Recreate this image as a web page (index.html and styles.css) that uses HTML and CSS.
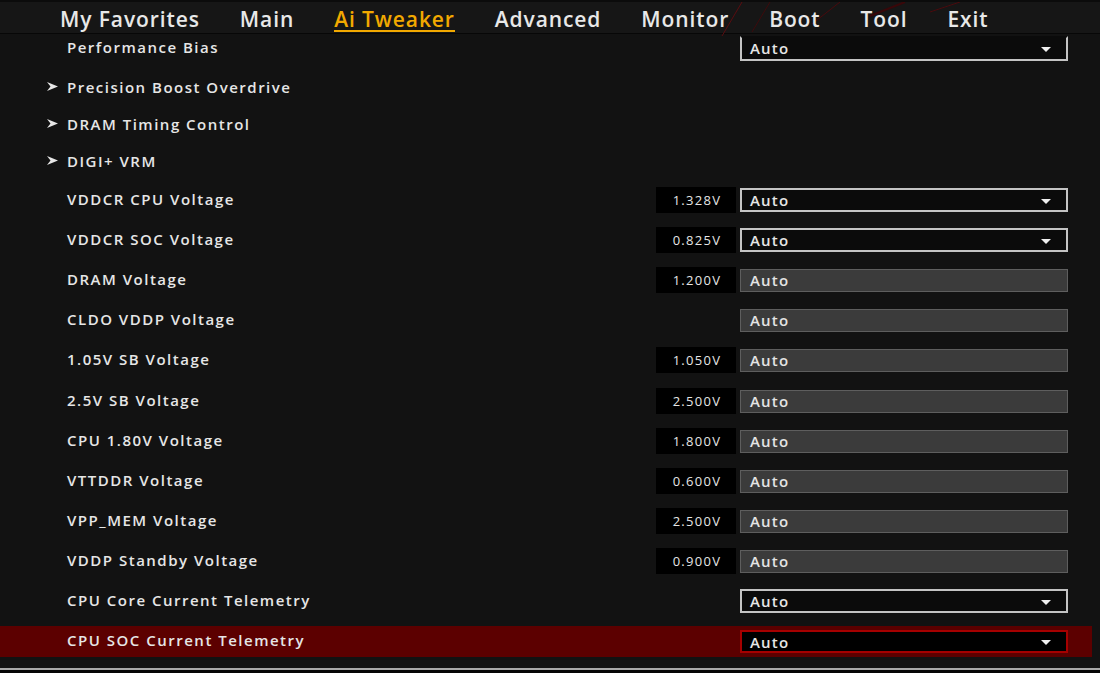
FILE: index.html
```html
<!DOCTYPE html>
<html lang="en">
<head>
    <meta charset="UTF-8">
    <meta name="viewport" content="width=device-width, initial-scale=1.0">
    <title>Ai Tweaker</title>
    <link rel="stylesheet" href="styles.css">
</head>
<body>

    <header class="topbar">
        <svg class="streaks" width="1100" height="34" viewBox="0 0 1100 34">
            <line x1="742" y1="0" x2="722" y2="34" stroke="#5a0d10" stroke-width="1"/>
            <line x1="770" y1="0" x2="752" y2="30" stroke="#3e0a0c" stroke-width="1"/>
            <line x1="840" y1="0" x2="812" y2="22" stroke="#4a0a0d" stroke-width="1"/>
            <line x1="905" y1="0" x2="870" y2="14" stroke="#3a0709" stroke-width="2"/>
            <line x1="960" y1="0" x2="930" y2="10" stroke="#4a0a0d" stroke-width="1"/>
        </svg>
        <nav class="tabs">
            <span class="tab">My Favorites</span>
            <span class="tab">Main</span>
            <span class="tab active">Ai Tweaker</span>
            <span class="tab">Advanced</span>
            <span class="tab">Monitor</span>
            <span class="tab">Boot</span>
            <span class="tab">Tool</span>
            <span class="tab">Exit</span>
        </nav>
    </header>

    <main class="list">
        <div class="row">
            <span class="label">Performance Bias</span>
            <div class="select cut"><span>Auto</span><i class="caret"></i></div>
        </div>

        <div class="row sub">
            <svg class="arrow" width="11" height="9" viewBox="0 0 11 9"><polygon points="0,0 11,4.5 0,9 3.5,4.5" fill="#e6e6e6"/></svg>
            <span class="label">Precision Boost Overdrive</span>
        </div>
        <div class="row sub">
            <svg class="arrow" width="11" height="9" viewBox="0 0 11 9"><polygon points="0,0 11,4.5 0,9 3.5,4.5" fill="#e6e6e6"/></svg>
            <span class="label">DRAM Timing Control</span>
        </div>
        <div class="row sub">
            <svg class="arrow" width="11" height="9" viewBox="0 0 11 9"><polygon points="0,0 11,4.5 0,9 3.5,4.5" fill="#e6e6e6"/></svg>
            <span class="label">DIGI+ VRM</span>
        </div>

        <div class="row after-sub">
            <span class="label">VDDCR CPU Voltage</span>
            <span class="value">1.328V</span>
            <div class="select"><span>Auto</span><i class="caret"></i></div>
        </div>
        <div class="row">
            <span class="label">VDDCR SOC Voltage</span>
            <span class="value">0.825V</span>
            <div class="select"><span>Auto</span><i class="caret"></i></div>
        </div>
        <div class="row">
            <span class="label">DRAM Voltage</span>
            <span class="value">1.200V</span>
            <div class="field">Auto</div>
        </div>
        <div class="row">
            <span class="label">CLDO VDDP Voltage</span>
            <div class="field">Auto</div>
        </div>
        <div class="row">
            <span class="label">1.05V SB Voltage</span>
            <span class="value">1.050V</span>
            <div class="field">Auto</div>
        </div>
        <div class="row nudge">
            <span class="label">2.5V SB Voltage</span>
            <span class="value">2.500V</span>
            <div class="field">Auto</div>
        </div>
        <div class="row">
            <span class="label">CPU 1.80V Voltage</span>
            <span class="value">1.800V</span>
            <div class="field">Auto</div>
        </div>
        <div class="row">
            <span class="label">VTTDDR Voltage</span>
            <span class="value">0.600V</span>
            <div class="field">Auto</div>
        </div>
        <div class="row">
            <span class="label">VPP_MEM Voltage</span>
            <span class="value">2.500V</span>
            <div class="field">Auto</div>
        </div>
        <div class="row">
            <span class="label">VDDP Standby Voltage</span>
            <span class="value">0.900V</span>
            <div class="field">Auto</div>
        </div>
        <div class="row">
            <span class="label">CPU Core Current Telemetry</span>
            <div class="select"><span>Auto</span><i class="caret"></i></div>
        </div>
        <div class="row selected">
            <span class="label">CPU SOC Current Telemetry</span>
            <div class="select"><span>Auto</span><i class="caret"></i></div>
        </div>
    </main>

    <footer class="bottom"></footer>

</body>
</html>
```

FILE: styles.css
```css
body {
    margin: 0;
    background: #121212;
    color: #e6e6e6;
    font-family: "Open Sans", "DejaVu Sans", sans-serif;
    width: 1100px;
    height: 673px;
    overflow: hidden;
    display: flex;
    flex-direction: column;
}

/* Top tab bar */
.topbar {
    position: relative;
    height: 31px;
    background: #161616;
    border-top: 2px solid #0b0b0b;
    border-bottom: 1px solid #070707;
    flex: none;
}
.streaks { position: absolute; top: 0; left: 0; }
.tabs {
    position: relative;
    display: flex;
    gap: 40px;
    padding-left: 60px;
    height: 31px;
    align-items: center;
    padding-top: 2px;
    box-sizing: border-box;
}
.tab {
    font-size: 21px;
    font-weight: 600;
    letter-spacing: 0.9px;
    color: #e8e8e8;
    line-height: 24px;
}
.tab.active {
    color: #f2a900;
    border-bottom: 2px solid #f2a900;
    line-height: 21px;
    margin-top: 3px;
}

/* Settings list */
.list {
    flex: 1;
    display: flex;
    flex-direction: column;
    gap: 10px;
}
.row {
    display: flex;
    align-items: center;
    height: 30px;
    padding-left: 67px;
    margin-right: 8px;
    flex: none;
}
.row:first-child { height: 28px; margin-bottom: 1px; }
.row.sub { height: 27px; padding-left: 47px; }
.row.after-sub { margin-top: 1px; }
.row.nudge { margin-top: 1px; }
.arrow { margin-right: 9px; }
.label {
    flex: 1;
    font-size: 15px;
    font-weight: 600;
    letter-spacing: 1.5px;
    margin-top: -3px;
}
.row.sub .label { margin-top: 0; }

.value {
    width: 80px;
    height: 26px;
    line-height: 26px;
    background: #000;
    font-size: 13px;
    letter-spacing: 1.3px;
    text-align: center;
    margin-right: 4px;
    padding-left: 2px;
    box-sizing: border-box;
}

.select, .field {
    width: 328px;
    height: 24px;
    box-sizing: border-box;
    display: flex;
    align-items: center;
    padding-left: 8px;
    font-size: 15px;
    font-weight: 600;
    letter-spacing: 1.2px;
    margin-right: 24px;
}
.select {
    border: 2px solid #c4c4c4;
    background: #0b0b0b;
    justify-content: space-between;
    padding-right: 15px;
}
.select.cut { border-top-color: transparent; height: 25px; }
.field {
    height: 23px;
    background: #3b3b3b;
    border: 1px solid #5e5e5e;
    padding-left: 9px;
    color: #e4e4e4;
}
.caret {
    width: 0;
    height: 0;
    border-left: 5px solid transparent;
    border-right: 5px solid transparent;
    border-top: 5px solid #f0f0f0;
    margin-top: 2px;
}

.row.selected { height: 31px; background: #5c0000; }
.row.selected .select { height: 23px; border-color: #a60000; background: #000; }

.bottom {
    height: 3px;
    flex: none;
    border-top: 2px solid #a8a8a8;
    background: #050505;
}
```
